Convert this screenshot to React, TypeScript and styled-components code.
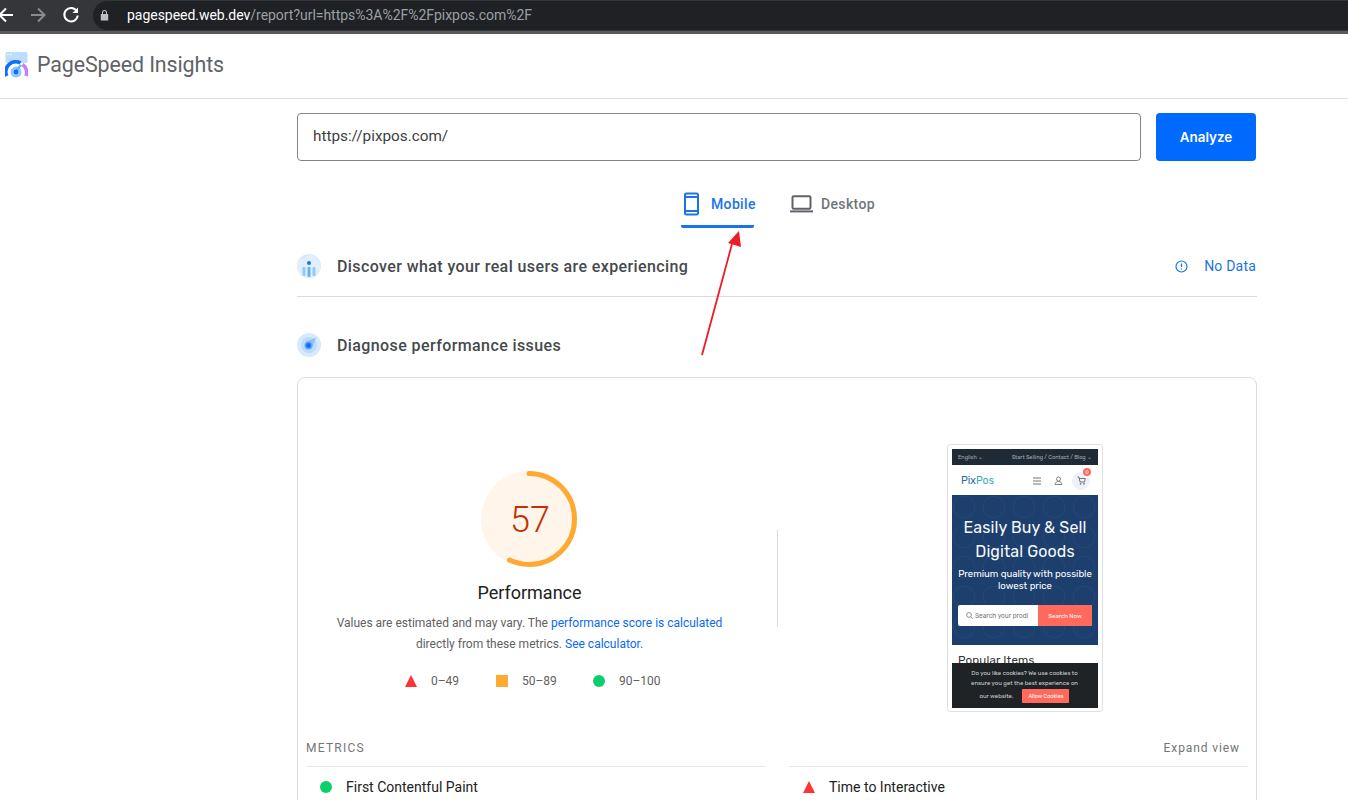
import React from "react";
import styled, { createGlobalStyle } from "styled-components";

const Global = createGlobalStyle`
  html, body { margin: 0; padding: 0; background: #fff; height: 800px; overflow: hidden; }
  * { box-sizing: border-box; }
  body { font-family: Roboto, "Liberation Sans", Arial, sans-serif; }
`;
const Page = styled.div`position: relative; width: 1348px; height: 800px; overflow: hidden; background: #fff;`;
const BrowserBar = styled.div`
  height: 34px; background: #35363a; border-bottom: 3px solid #5a5b5e; display: flex; align-items: center; padding-bottom: 1px;
`;
const NavIcon = styled.svg<{ $ml: number }>`width: 18px; height: 18px; flex: none; margin-left: ${p => p.$ml}px;`;
const Omnibox = styled.div`
  margin-left: 13px; flex: 1; height: 29px; background: #202124; border-radius: 15px 0 0 15px; display: flex; align-items: center; padding-left: 7px;
  font-size: 14px; letter-spacing: -0.03px; color: #9aa0a6; white-space: nowrap;
`;
const Host = styled.span`color: #fff; margin-left: 18px;`;
const Header = styled.header`
  height: 65px; border-bottom: 1px solid #dadce0; display: flex; align-items: center; padding: 0 0 3px 5px; gap: 9px;
`;
const Title = styled.h1`margin: 0; font: 400 21.4px Roboto, sans-serif; color: #5f6368; letter-spacing: -0.1px;`;
const Main = styled.main`width: 960px; margin-left: 297px;`;
const Form = styled.div`display: flex; gap: 15px; margin-top: 14px; width: 959px;`;
const UrlBox = styled.div`
  flex: 1; height: 48px; border: 1px solid #80868b; border-radius: 4px; padding: 0 0 2px 15px; display: flex; align-items: center; font-size: 15.3px; color: #3c4043;
`;
const Analyze = styled.button`
  width: 100px; height: 48px; border: 0; border-radius: 4px; background: #0069fe; color: #fff; font: 600 13.4px Inter, Roboto, sans-serif;
`;
const Tabs = styled.div`display: flex; margin: 19px 0 0; padding-left: 384px; gap: 35px; height: 48px;`;
const Tab = styled.div<{ $active?: boolean }>`
  display: flex; align-items: center; align-self: stretch; gap: ${p => p.$active ? 12 : 8}px; padding: 2px 0 0 ${p => p.$active ? 0 : 1}px;
  width: ${p => p.$active ? 73 : 86}px; white-space: nowrap;
  color: ${p => p.$active ? "#1a73e8" : "#70757a"}; font-size: 14px; font-weight: 500; letter-spacing: 0.35px;
  border-bottom: 3px solid ${p => p.$active ? "#1a73e8" : "transparent"}; border-radius: 0 0 2px 2px;
  svg { flex: none; }
`;
const Section = styled.div<{ $border?: boolean; $h: number; $pt: number }>`
  height: ${p => p.$h}px; padding-top: ${p => p.$pt}px; display: flex; align-items: center; gap: 16px;
  border-bottom: ${p => p.$border ? "1px solid #dadce0" : "0"};
`;
const SectionTitle = styled.h2`flex: 1; margin: 0; font: 500 16px Roboto, sans-serif; letter-spacing: 0.4px; color: #45494d;`;
const NoData = styled.div`display: flex; align-items: center; gap: 16px; margin-right: 1px; color: #1a73e8; font-size: 14px; letter-spacing: 0.2px;`;
const Card = styled.section`
  height: 520px; border: 1px solid #dadce0; border-radius: 8px; padding: 0 8px;
`;
const Top = styled.div`display: flex; height: 362px;`;
const ScoreCol = styled.div`
  width: 447px; padding-top: 92px; display: flex; flex-direction: column; align-items: center;
`;
const GaugeSvg = styled.svg`margin-left: -2px; flex: none;`;
const ScoreText = styled.text`font: 300 36px Roboto, sans-serif; fill: #c33300;`;
const ScoreTitle = styled.div`margin-top: 13px; font-size: 18px; line-height: 24px; color: #212121;`;
const Desc = styled.p`
  margin: 8px 0 0; width: 447px; text-align: center; font-size: 12px; line-height: 21px; color: #616161; white-space: nowrap;
`;
const Link = styled.span`color: #0a6af0;`;
const Legend = styled.div`display: flex; align-items: center; margin: 16px 0 0 9px; height: 20px; font-size: 12px; color: #616161; white-space: nowrap;`;
const LegendItem = styled.div<{ $w: number }>`display: flex; align-items: center; gap: 11px; width: ${p => p.$w}px;`;
const Triangle = styled.span`width: 12px; height: 12px; flex: none; background: #ff3333; clip-path: polygon(50% 0, 100% 100%, 0 100%);`;
const Square = styled.span`width: 12px; height: 12px; flex: none; background: #ffaa33;`;
const Dot = styled.span`width: 12px; height: 12px; flex: none; background: #0cce6b; border-radius: 50%;`;
const VDivider = styled.div`width: 1px; height: 97px; background: #dadce0; margin: 152px 0 0 24px;`;
const Shot = styled.div`
  width: 156px; height: 268px; margin: 66px 0 0 169px; border: 1px solid #e0e0e0; border-radius: 3px; padding: 4px; position: relative; overflow: hidden;
`;
const Inner = styled.div`height: 259px; overflow: hidden; display: flex; flex-direction: column; position: relative; font-family: Rubik, Roboto, sans-serif;`;
const ShotTop = styled.div`
  height: 16px; flex: none; background: #1e2a35; color: #a4abb2; font-size: 5.5px; display: flex; align-items: center; justify-content: space-between; padding: 0 6px;
`;
const ShotNav = styled.div`height: 30px; flex: none; display: flex; align-items: center; padding: 1px 9px 0; position: relative;`;
const ShotLogo = styled.div`font-size: 10.5px; font-weight: 400; color: #2c6da4; flex: 1;`;
const ShotLogoAlt = styled.span`color: #39a9b8;`;
const UserIcon = styled.svg`margin-left: 12px;`;
const Cart = styled.span`
  width: 18px; height: 18px; border-radius: 50%; background: #eef2f6; display: flex; align-items: center; justify-content: center; margin-left: 9px; margin-right: -1px; position: relative;
`;
const CartBadge = styled.span`
  position: absolute; top: -4px; right: -1px; width: 8px; height: 8px; border-radius: 50%; background: #ff6a5c; color: #fff; font-size: 5px; line-height: 8px; text-align: center;
`;
const Hero = styled.div`
  height: 150px; flex: none; color: #fff; display: flex; flex-direction: column; align-items: center; padding-top: 21px;
  background-color: #1c3f6d;
  background-image: radial-gradient(circle at 12px 12px, transparent 10px, rgba(255,255,255,.045) 10.5px, transparent 11.5px);
  background-size: 30px 30px;
`;
const HeroTitle = styled.div`font-size: 16px; line-height: 24px; font-weight: 400; color: #f6f8fa; text-align: center; letter-spacing: 0.1px;`;
const HeroSub = styled.div`font-size: 9.6px; line-height: 12px; text-align: center; margin-top: 4px; white-space: nowrap;`;
const SearchBar = styled.div`
  margin-top: 13px; width: 134px; height: 21px; background: #fff; border-radius: 2px; display: flex; overflow: hidden; font-size: 6.5px; flex: none;
`;
const SearchInput = styled.div`width: 80px; color: #777; display: flex; align-items: center; gap: 2px; padding-left: 8px; white-space: nowrap; overflow: hidden;`;
const SearchIcon = styled.svg`flex: none;`;
const SearchBtn = styled.div`flex: 1; background: #ff6a5c; color: #fff; display: flex; align-items: center; justify-content: center; font-size: 6px;`;
const Popular = styled.div`font-size: 11.5px; color: #333; padding: 8px 0 0 6px; line-height: 14px; height: 18px; flex: none; overflow: hidden; letter-spacing: 0.2px;`;
const Cookie = styled.div`
  flex: 1; background: #1f2326; color: #cfd2d4; font-size: 6px; line-height: 10.4px; text-align: center; padding: 5px 6px 0 5px;
`;
const CookieBtn = styled.span`
  display: inline-block; width: 47px; height: 14px; line-height: 14px; margin-left: 9px; background: #ff6a5c; color: #fff; font-size: 5.5px; border-radius: 1px;
`;
const MetricsGrid = styled.div`display: grid; grid-template-columns: 459px 459px; column-gap: 24px;`;
const MetricsHead = styled.div<{ $right?: boolean }>`
  height: 27px; border-bottom: 1px solid #e6e6e6; font-size: 12px; color: #757575; line-height: 16px; padding-right: 8px; text-align: ${p => p.$right ? "right" : "left"};
  letter-spacing: ${p => p.$right ? "0.9px" : "1.25px"};
`;
const Metric = styled.div`height: 41px; padding: 12px 0 0 14px; display: flex; align-items: flex-start; gap: 14px; font-size: 14px; line-height: 16px; color: #212121;`;
const MetricMark = styled.span`display: flex; margin-top: 2px;`;
const ArrowLayer = styled.svg`position: absolute; left: 0; top: 0; width: 1348px; height: 800px; pointer-events: none;`;

const LogoIcon = () => (
  <svg width="23" height="26" viewBox="0 0 23 26" fill="none">
    <rect x="0.5" y="0" width="22" height="11" rx="1.5" fill="#bbdefb" />
    <circle cx="3" cy="2.5" r="0.8" fill="#fff" /><circle cx="6" cy="2.5" r="0.8" fill="#fff" />
    <circle cx="11" cy="20" r="5.5" fill="#90caf9" />
    <path d="M1.8 24A10 10 0 0 1 15.5 10.9" stroke="#0d6efd" strokeWidth="3.6" />
    <path d="M17.5 12.5A10 10 0 0 1 21 24" stroke="#c77dff" strokeWidth="3.6" />
    <path d="M10 20l6-7" stroke="#64b5f6" strokeWidth="2.4" />
    <circle cx="11" cy="20" r="2.4" fill="#0d6efd" />
  </svg>
);
const Crux = () => (
  <svg width="24" height="24" viewBox="0 0 24 24">
    <circle cx="12" cy="12" r="12" fill="#d7e9fd" />
    <path d="M12 0a12 12 0 0 1 0 24A12 12 0 0 1 3 4c3 2 6 0 9-4z" fill="#e8f2fe" opacity=".6" />
    <circle cx="12" cy="9" r="2" fill="#1a73e8" />
    <rect x="5.5" y="13" width="3" height="9" rx="1" fill="#90caf9" />
    <rect x="10.5" y="13" width="3" height="10" rx="1" fill="#64b5f6" />
    <rect x="15.5" y="13" width="3" height="9" rx="1" fill="#90caf9" />
  </svg>
);
const Diagnose = () => (
  <svg width="24" height="24" viewBox="0 0 24 24">
    <circle cx="12" cy="12" r="12" fill="#d7e9fd" />
    <circle cx="12" cy="12" r="8" fill="#bcdcfb" />
    <path d="M9 8.5L19 4.5L15 15z" fill="#8cc4f8" />
    <circle cx="11.5" cy="12.5" r="4" fill="#64a8f5" />
    <circle cx="11.5" cy="12.5" r="2.4" fill="#0d6efd" />
  </svg>
);

export default function App() {
  return (
    <Page>
      <Global />
      <BrowserBar>
        <NavIcon $ml={-3} viewBox="0 0 18 18" fill="none" stroke="#fff" strokeWidth="2"><path d="M16 9H3M9 2.5L2.5 9 9 15.5" /></NavIcon>
        <NavIcon $ml={14} viewBox="0 0 18 18" fill="none" stroke="#8a8b8e" strokeWidth="2"><path d="M2 9h13M9 2.5L15.5 9 9 15.5" /></NavIcon>
        <NavIcon $ml={15} viewBox="0 0 18 18" fill="none"><path d="M14.6 5A6.7 6.7 0 1 0 15.7 9.5" stroke="#fff" strokeWidth="2" /><path d="M16 1.5V7h-5.5z" fill="#fff" /></NavIcon>
        <Omnibox>
          <svg width="9" height="12" viewBox="0 0 9 12"><path d="M2 5V3.5a2.5 2.5 0 0 1 5 0V5h1.2v6.5H.8V5zM3 5h3V3.5a1.5 1.5 0 0 0-3 0z" fill="#bdc1c6" fillRule="evenodd" /></svg>
          <Host>pagespeed.web.dev</Host>/report?url=https%3A%2F%2Fpixpos.com%2F
        </Omnibox>
      </BrowserBar>
      <Header>
        <LogoIcon />
        <Title>PageSpeed Insights</Title>
      </Header>
      <Main>
        <Form>
          <UrlBox>https://pixpos.com/</UrlBox>
          <Analyze>Analyze</Analyze>
        </Form>
        <Tabs>
          <Tab $active>
            <svg width="18" height="24" viewBox="0 0 18 24" fill="none"><rect x="4" y="1.5" width="13" height="21" rx="1.5" stroke="#1a73e8" strokeWidth="2" /><path d="M4 5h13M4 19h13" stroke="#1a73e8" strokeWidth="2" /></svg>
            Mobile
          </Tab>
          <Tab>
            <svg width="23" height="18" viewBox="0 0 23 18" fill="none"><rect x="2.5" y="1.2" width="18" height="12.6" rx="1.2" stroke="#5f6368" strokeWidth="2" /><path d="M0 16.4h23" stroke="#5f6368" strokeWidth="2" /></svg>
            Desktop
          </Tab>
        </Tabs>
        <Section $h={69} $pt={8} $border>
          <Crux />
          <SectionTitle>Discover what your real users are experiencing</SectionTitle>
          <NoData>
            <svg width="13" height="13" viewBox="0 0 13 13" fill="none"><circle cx="6.5" cy="6.5" r="5.5" stroke="#1a73e8" strokeWidth="1.2" /><path d="M6.5 3.5v3.6M6.5 8.4v1.2" stroke="#1a73e8" strokeWidth="1.3" /></svg>
            No Data
          </NoData>
        </Section>
        <Section $h={80} $pt={16}>
          <Diagnose />
          <SectionTitle>Diagnose performance issues</SectionTitle>
        </Section>
        <Card>
          <Top>
            <ScoreCol>
              <GaugeSvg width="98" height="98" viewBox="0 0 98 98">
                <circle cx="49" cy="49" r="48" fill="#fff5eb" />
                <circle cx="49" cy="49" r="45.5" fill="none" stroke="#ffa933" strokeWidth="5" strokeLinecap="round" strokeDasharray="162.9 300" transform="rotate(-90 49 49)" />
                <ScoreText x="50" y="61.5" textAnchor="middle">57</ScoreText>
              </GaugeSvg>
              <ScoreTitle>Performance</ScoreTitle>
              <Desc>
                Values are estimated and may vary. The <Link>performance score is calculated</Link>
                <br />directly from these metrics. <Link>See calculator.</Link>
              </Desc>
              <Legend>
                <LegendItem $w={91}><Triangle />&nbsp;0–49</LegendItem>
                <LegendItem $w={97}><Square />&nbsp;50–89</LegendItem>
                <LegendItem $w={70}><Dot />&nbsp;90–100</LegendItem>
              </Legend>
            </ScoreCol>
            <VDivider />
            <Shot>
              <Inner>
                <ShotTop><span>English ⌄</span><span>Start Selling / Contact / Blog ⌄</span></ShotTop>
                <ShotNav>
                  <ShotLogo>Pix<ShotLogoAlt>Pos</ShotLogoAlt></ShotLogo>
                  <svg width="10" height="8" viewBox="0 0 10 8" stroke="#777" strokeWidth="1"><path d="M1 1h8M1 4h8M1 7h8" /></svg>
                  <UserIcon width="9" height="9" viewBox="0 0 9 9" fill="none" stroke="#666" strokeWidth=".8"><circle cx="4.5" cy="3" r="2" /><path d="M1 8.5c0-4 7-4 7 0z" /></UserIcon>
                  <Cart>
                    <svg width="9" height="9" viewBox="0 0 9 9" fill="none" stroke="#556" strokeWidth=".8"><path d="M.5 1h1.5l1 5h4.5l.8-3.5H2.4" /><circle cx="3.5" cy="7.8" r=".5" /><circle cx="7" cy="7.8" r=".5" /></svg>
                    <CartBadge>0</CartBadge>
                  </Cart>
                </ShotNav>
                <Hero>
                  <HeroTitle>Easily Buy &amp; Sell<br />Digital Goods</HeroTitle>
                  <HeroSub>Premium quality with possible<br />lowest price</HeroSub>
                  <SearchBar>
                    <SearchInput>
                      <SearchIcon width="7" height="7" viewBox="0 0 7 7" fill="none" stroke="#666" strokeWidth=".7"><circle cx="3" cy="3" r="2.4" /><path d="M5 5l1.7 1.7" /></SearchIcon>
                      Search your prodi
                    </SearchInput>
                    <SearchBtn>Search Now</SearchBtn>
                  </SearchBar>
                </Hero>
                <Popular>Popular Items</Popular>
                <Cookie>
                  Do you like cookies? We use cookies to<br />ensure you get the best experience on<br />our website.<CookieBtn>Allow Cookies</CookieBtn>
                </Cookie>
              </Inner>
            </Shot>
          </Top>
          <MetricsGrid>
            <MetricsHead>METRICS</MetricsHead>
            <MetricsHead $right>Expand view</MetricsHead>
            <Metric><MetricMark><Dot /></MetricMark>First Contentful Paint</Metric>
            <Metric><MetricMark><Triangle /></MetricMark>Time to Interactive</Metric>
          </MetricsGrid>
        </Card>
      </Main>
      <ArrowLayer viewBox="0 0 1348 800">
        <path d="M702 355L732 244" stroke="#ee1c25" strokeWidth="1.8" fill="none" />
        <path d="M739 231L741 247L728 243z" fill="#ee1c25" />
      </ArrowLayer>
    </Page>
  );
}
